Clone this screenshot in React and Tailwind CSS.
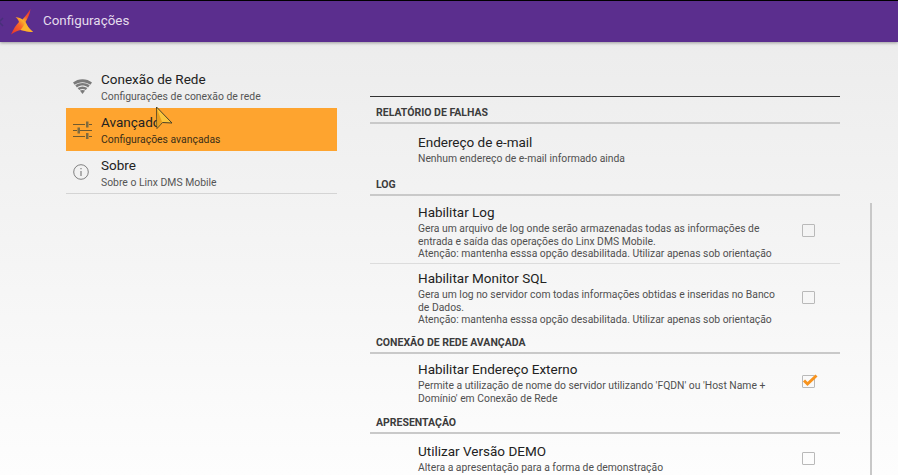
const sans = "font-['Roboto',sans-serif]"

function Logo() {
  return (
    <svg width="22" height="26" viewBox="0 0 22 26" className="block">
      <defs>
        <linearGradient id="lx" x1="0" y1="1" x2="0.85" y2="0">
          <stop offset="0" stopColor="#e62f2c" />
          <stop offset="0.4" stopColor="#f8662a" />
          <stop offset="0.58" stopColor="#fbb02c" />
          <stop offset="0.75" stopColor="#f4552c" />
          <stop offset="1" stopColor="#e8352c" />
        </linearGradient>
      </defs>
      <path d="M19.500 0 C19 5 16.500 9.500 14.500 13 C16 17 18.500 20 22 23 C17 23 12.500 21.500 9.500 21 C6 21.500 3 23.500 0 25.500 C2.500 20 5 16 8 13 C7.500 11 6.500 10 4.500 8 C8 8.500 10 9.500 11.500 10.500 C14 8 17 4 19.500 0 Z" fill="url(#lx)" />
      <path d="M14.500 13 C16 17 18.500 20 22 23 C17 23 12.500 21.500 9.500 21 C11.500 18.500 13.500 15.500 14.500 13 Z" fill="#fbb32c" />
    </svg>
  )
}

function WifiIcon() {
  return (
    <svg width="19" height="15" viewBox="0 0 19 15" className="block">
      <path d="M0 3.500 C5 -1 14 -1 19 3.500 L17.400 5.700 C12.500 2.300 6.500 2.300 1.600 5.700 Z" fill="#7a7a7a" />
      <path d="M2.300 6.300 C7 3.100 12 3.100 16.700 6.300 L15.100 8.400 C11.500 6 7.500 6 3.900 8.400 Z" fill="#7a7a7a" />
      <path d="M4.600 9 C7.700 7 11.300 7 14.400 9 L12.800 11 C10.800 9.800 8.200 9.800 6.200 11 Z" fill="#7a7a7a" />
      <path d="M6.900 11.600 C8.500 10.700 10.500 10.700 12.100 11.600 L9.500 15 Z" fill="#7a7a7a" />
    </svg>
  )
}

function SlidersIcon() {
  return (
    <svg width="19" height="18" viewBox="0 0 19 18" className="block" fill="none" stroke="#6f5a30">
      <path d="M0 3.500H12M16 3.500H19M0 9.500H4M7 9.500H19M0 15.500H12M16 15.500H19" strokeWidth="1" />
      <rect x="13" y="0.500" width="2.500" height="6" fill="#7d6a40" stroke="none" />
      <rect x="4.500" y="6.500" width="2.500" height="6" fill="#7d6a40" stroke="none" />
      <rect x="13" y="12" width="2.500" height="6" fill="#7d6a40" stroke="none" />
    </svg>
  )
}

function InfoIcon() {
  return (
    <svg width="16" height="16" viewBox="0 0 16 16" className="block" fill="none" stroke="#808080">
      <circle cx="8" cy="8" r="7.300" strokeWidth="1" />
      <path d="M8 7V12M8 4V5.300" strokeWidth="1.200" />
    </svg>
  )
}

function Cursor() {
  return (
    <svg width="19" height="25" viewBox="0 0 19 25" className="absolute left-[155px] top-[106px]">
      <path d="M1.500 1 L17 17 L7.500 16.500 L2 22.500 Z" fill="#fcc53c" stroke="#4a4228" strokeWidth="1" />
      <path d="M1.800 2.500 L7.200 16.200 L2.400 21.500 Z" fill="#e99d1e" />
    </svg>
  )
}

function MenuItem({ icon, title, sub, active, last }) {
  return (
    <div className={`flex h-[43px] items-center ${active ? "bg-[#fea42f]" : ""} ${last ? "border-b border-[#d4d4d4]" : ""}`}>
      <div className="flex w-[35px] pl-[7px]">{icon}</div>
      <div className="min-w-0 pt-[1px]">
        <div className="text-[13.500px] leading-[18px] text-[#222]">{title}</div>
        <div className={`mt-[1px] text-[10.400px] leading-[15px] ${active ? "text-[#3a2e18]" : "text-[#555]"}`}>{sub}</div>
      </div>
    </div>
  )
}

function Section({ title, className }) {
  return (
    <div className={`flex items-end border-b-2 border-[#c9c9c9] pb-[2px] pl-[6px] text-[10.500px] font-bold leading-[14px] text-[#3c3c3c] ${className}`}>
      {title}
    </div>
  )
}

function Pref({ title, lines, check, className, border, checkClass }) {
  return (
    <div className={`relative pl-[48px] ${border ? "border-b border-[#dcdcdc]" : ""} ${className}`}>
      <div className="text-[13.500px] leading-[18px] text-[#222]">{title}</div>
      <div className="mt-[2px] w-[360px] text-[10.350px] leading-[12.500px] text-[#505050]">
        {lines.map((l) => (
          <div key={l} className="whitespace-nowrap">{l}</div>
        ))}
      </div>
      {check !== undefined && (
        <div className={`absolute right-[25px] h-[13px] w-[13px] rounded-[1px] border border-[#b9b9b9] ${checkClass}`}>
          {check && (
            <svg width="16" height="13" viewBox="0 0 16 13" className="absolute left-[-1px] top-[-2px]">
              <path d="M2 6.500 L5.500 10 L14.500 1.500" fill="none" stroke="#f7931e" strokeWidth="3" />
            </svg>
          )}
        </div>
      )}
    </div>
  )
}

export default function App() {
  return (
    <div className={`relative h-[475px] w-[898px] overflow-hidden bg-gradient-to-b from-[#ebebeb] to-[#fdfdfd] ${sans}`}>
      <div className="h-[1px] bg-black" />
      <header className="flex h-[41px] items-center bg-[#5b2e8e] shadow-[0_1px_3px_rgba(0,0,0,0.35)]">
        <svg width="4" height="10" viewBox="0 0 4 10" className="block">
          <path d="M3 1 L-1 5 L3 9" fill="none" stroke="#47307a" strokeWidth="1.500" />
        </svg>
        <div className="ml-[7px] mt-[1px]">
          <Logo />
        </div>
        <div className="ml-[10px] text-[13.400px] text-[#e4dcec]">Configurações</div>
      </header>

      <main className="flex pl-[66px]">
        <nav className="mt-[23px] w-[271px]">
          <MenuItem icon={<WifiIcon />} title="Conexão de Rede" sub="Configurações de conexão de rede" />
          <MenuItem icon={<SlidersIcon />} title="Avançado" sub="Configurações avançadas" active />
          <MenuItem icon={<InfoIcon />} title="Sobre" sub="Sobre o Linx DMS Mobile" last />
        </nav>
        <section className="ml-[33px] mt-[54px] w-[470px] border-t border-[#333]">
          <Section title="RELATÓRIO DE FALHAS" className="h-[27px]" />
          <Pref title="Endereço de e-mail" lines={["Nenhum endereço de e-mail informado ainda"]} className="h-[46px] pt-[9px]" />
          <Section title="LOG" className="h-[26px]" />
          <Pref
            title="Habilitar Log"
            lines={[
              "Gera um arquivo de log onde serão armazenadas todas as informações de",
              "entrada e saída das operações do Linx DMS Mobile.",
              "Atenção: mantenha esssa opção desabilitada. Utilizar apenas sob orientação",
            ]}
            check={false}
            checkClass="top-[28px]"
            border
            className="h-[68px] pt-[7px]"
          />
          <Pref
            title="Habilitar Monitor SQL"
            lines={[
              "Gera um log no servidor com todas informações obtidas e inseridas no Banco",
              "de Dados.",
              "Atenção: mantenha esssa opção desabilitada. Utilizar apenas sob orientação",
            ]}
            check={false}
            checkClass="top-[27px]"
            className="h-[66px] pt-[5px]"
          />
          <Section title="CONEXÃO DE REDE AVANÇADA" className="h-[24px]" />
          <Pref
            title="Habilitar Endereço Externo"
            lines={[
              "Permite a utilização de nome do servidor utilizando 'FQDN' ou 'Host Name +",
              "Domínio' em Conexão de Rede",
            ]}
            check
            checkClass="top-[21px]"
            className="h-[54px] pt-[6px]"
          />
          <Section title="APRESENTAÇÃO" className="h-[26px]" />
          <Pref
            title="Utilizar Versão DEMO"
            lines={["Altera a apresentação para a forma de demonstração"]}
            check={false}
            checkClass="top-[18px]"
            className="h-[46px] pt-[8px]"
          />
        </section>
        <div className="ml-[30px] mt-[161px] h-[272px] w-[2px] bg-[#c8c8c8]" />
      </main>
      <Cursor />
    </div>
  )
}
